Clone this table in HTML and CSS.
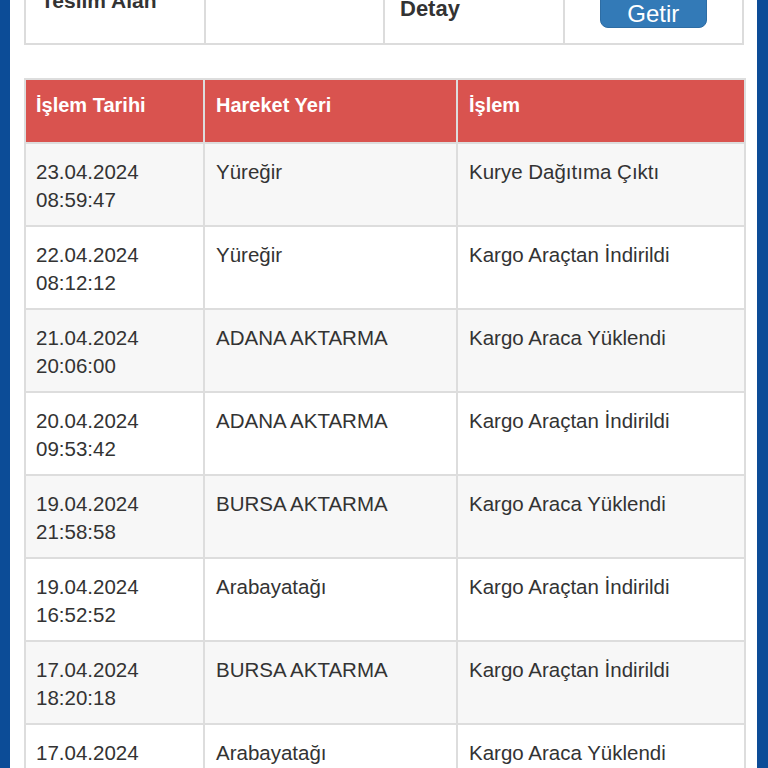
FILE: index.html
```html
<!DOCTYPE html>
<html lang="tr">
<head>
<meta charset="utf-8">
<title>Kargo Takip</title>
<link rel="stylesheet" href="styles.css">
</head>
<body>
<div class="page">
  <table class="form-table">
    <tr>
      <td class="label label-a">Teslim Alan</td>
      <td></td>
      <td class="label label-b">Detay</td>
      <td class="btn-cell"><button class="btn">Getir</button></td>
    </tr>
  </table>

  <table class="moves">
    <colgroup>
      <col class="c1"><col class="c2"><col class="c3">
    </colgroup>
    <thead>
      <tr><th>İşlem Tarihi</th><th>Hareket Yeri</th><th>İşlem</th></tr>
    </thead>
    <tbody>
      <tr><td>23.04.2024<br>08:59:47</td><td>Yüreğir</td><td>Kurye Dağıtıma Çıktı</td></tr>
      <tr><td>22.04.2024<br>08:12:12</td><td>Yüreğir</td><td>Kargo Araçtan İndirildi</td></tr>
      <tr><td>21.04.2024<br>20:06:00</td><td>ADANA AKTARMA</td><td>Kargo Araca Yüklendi</td></tr>
      <tr><td>20.04.2024<br>09:53:42</td><td>ADANA AKTARMA</td><td>Kargo Araçtan İndirildi</td></tr>
      <tr><td>19.04.2024<br>21:58:58</td><td>BURSA AKTARMA</td><td>Kargo Araca Yüklendi</td></tr>
      <tr><td>19.04.2024<br>16:52:52</td><td>Arabayatağı</td><td>Kargo Araçtan İndirildi</td></tr>
      <tr><td>17.04.2024<br>18:20:18</td><td>BURSA AKTARMA</td><td>Kargo Araçtan İndirildi</td></tr>
      <tr><td>17.04.2024<br>12:41:09</td><td>Arabayatağı</td><td>Kargo Araca Yüklendi</td></tr>
    </tbody>
  </table>
</div>
</body>
</html>
```
FILE: styles.css
```css
html, body {
  margin: 0;
  padding: 0;
}
body {
  background: #0c4c97;
  font-family: "Liberation Sans", Arial, Helvetica, sans-serif;
  color: #333;
  overflow: hidden;
}
.page {
  margin: 0 11px 0 10px;
  background: #fff;
  padding: 0 13px 0 14px;
  min-height: 768px;
}
.form-table {
  width: 100%;
  border-collapse: collapse;
  table-layout: fixed;
  margin-top: -48px;
}
.form-table td {
  border: 2px solid #dcdcdc;
  height: 91px;
  box-sizing: border-box;
  vertical-align: top;
  padding: 0 15px;
}
.label {
  font-weight: bold;
  line-height: 28px;
  color: #333;
}
.label-a {
  font-size: 21px;
  padding-top: 33px !important;
}
.label-b {
  font-size: 22px;
  padding-top: 41px !important;
}
.btn-cell {
  text-align: center;
  padding-top: 33px !important;
}
.btn {
  display: inline-block;
  width: 107px;
  padding: 14px 0 1px;
  font-family: "Liberation Sans", Arial, sans-serif;
  font-size: 24px;
  line-height: 24px;
  color: #fff;
  background: #337ab7;
  border: 1px solid #2e6da4;
  border-radius: 8px;
}
.moves {
  width: 100%;
  margin-top: 33px;
  border-collapse: collapse;
  table-layout: fixed;
}
.c1 { width: 179px; }
.c2 { width: 253px; }
.c3 { width: 288px; }
.moves th,
.moves td {
  border: 2px solid #dddddd;
  text-align: left;
  vertical-align: top;
  padding: 14px 11px 11px;
  font-size: 20.5px;
  line-height: 28px;
}
.moves th:first-child,
.moves td:first-child {
  padding-left: 10px;
}
.moves th {
  background: #d9534f;
  color: #fff;
  font-weight: bold;
  font-size: 20px;
  padding: 11px 11px 23px;
}
.moves tbody tr:nth-child(odd) td {
  background: #f7f7f7;
}
.moves tbody tr:nth-child(even) td {
  background: #fff;
}
```
